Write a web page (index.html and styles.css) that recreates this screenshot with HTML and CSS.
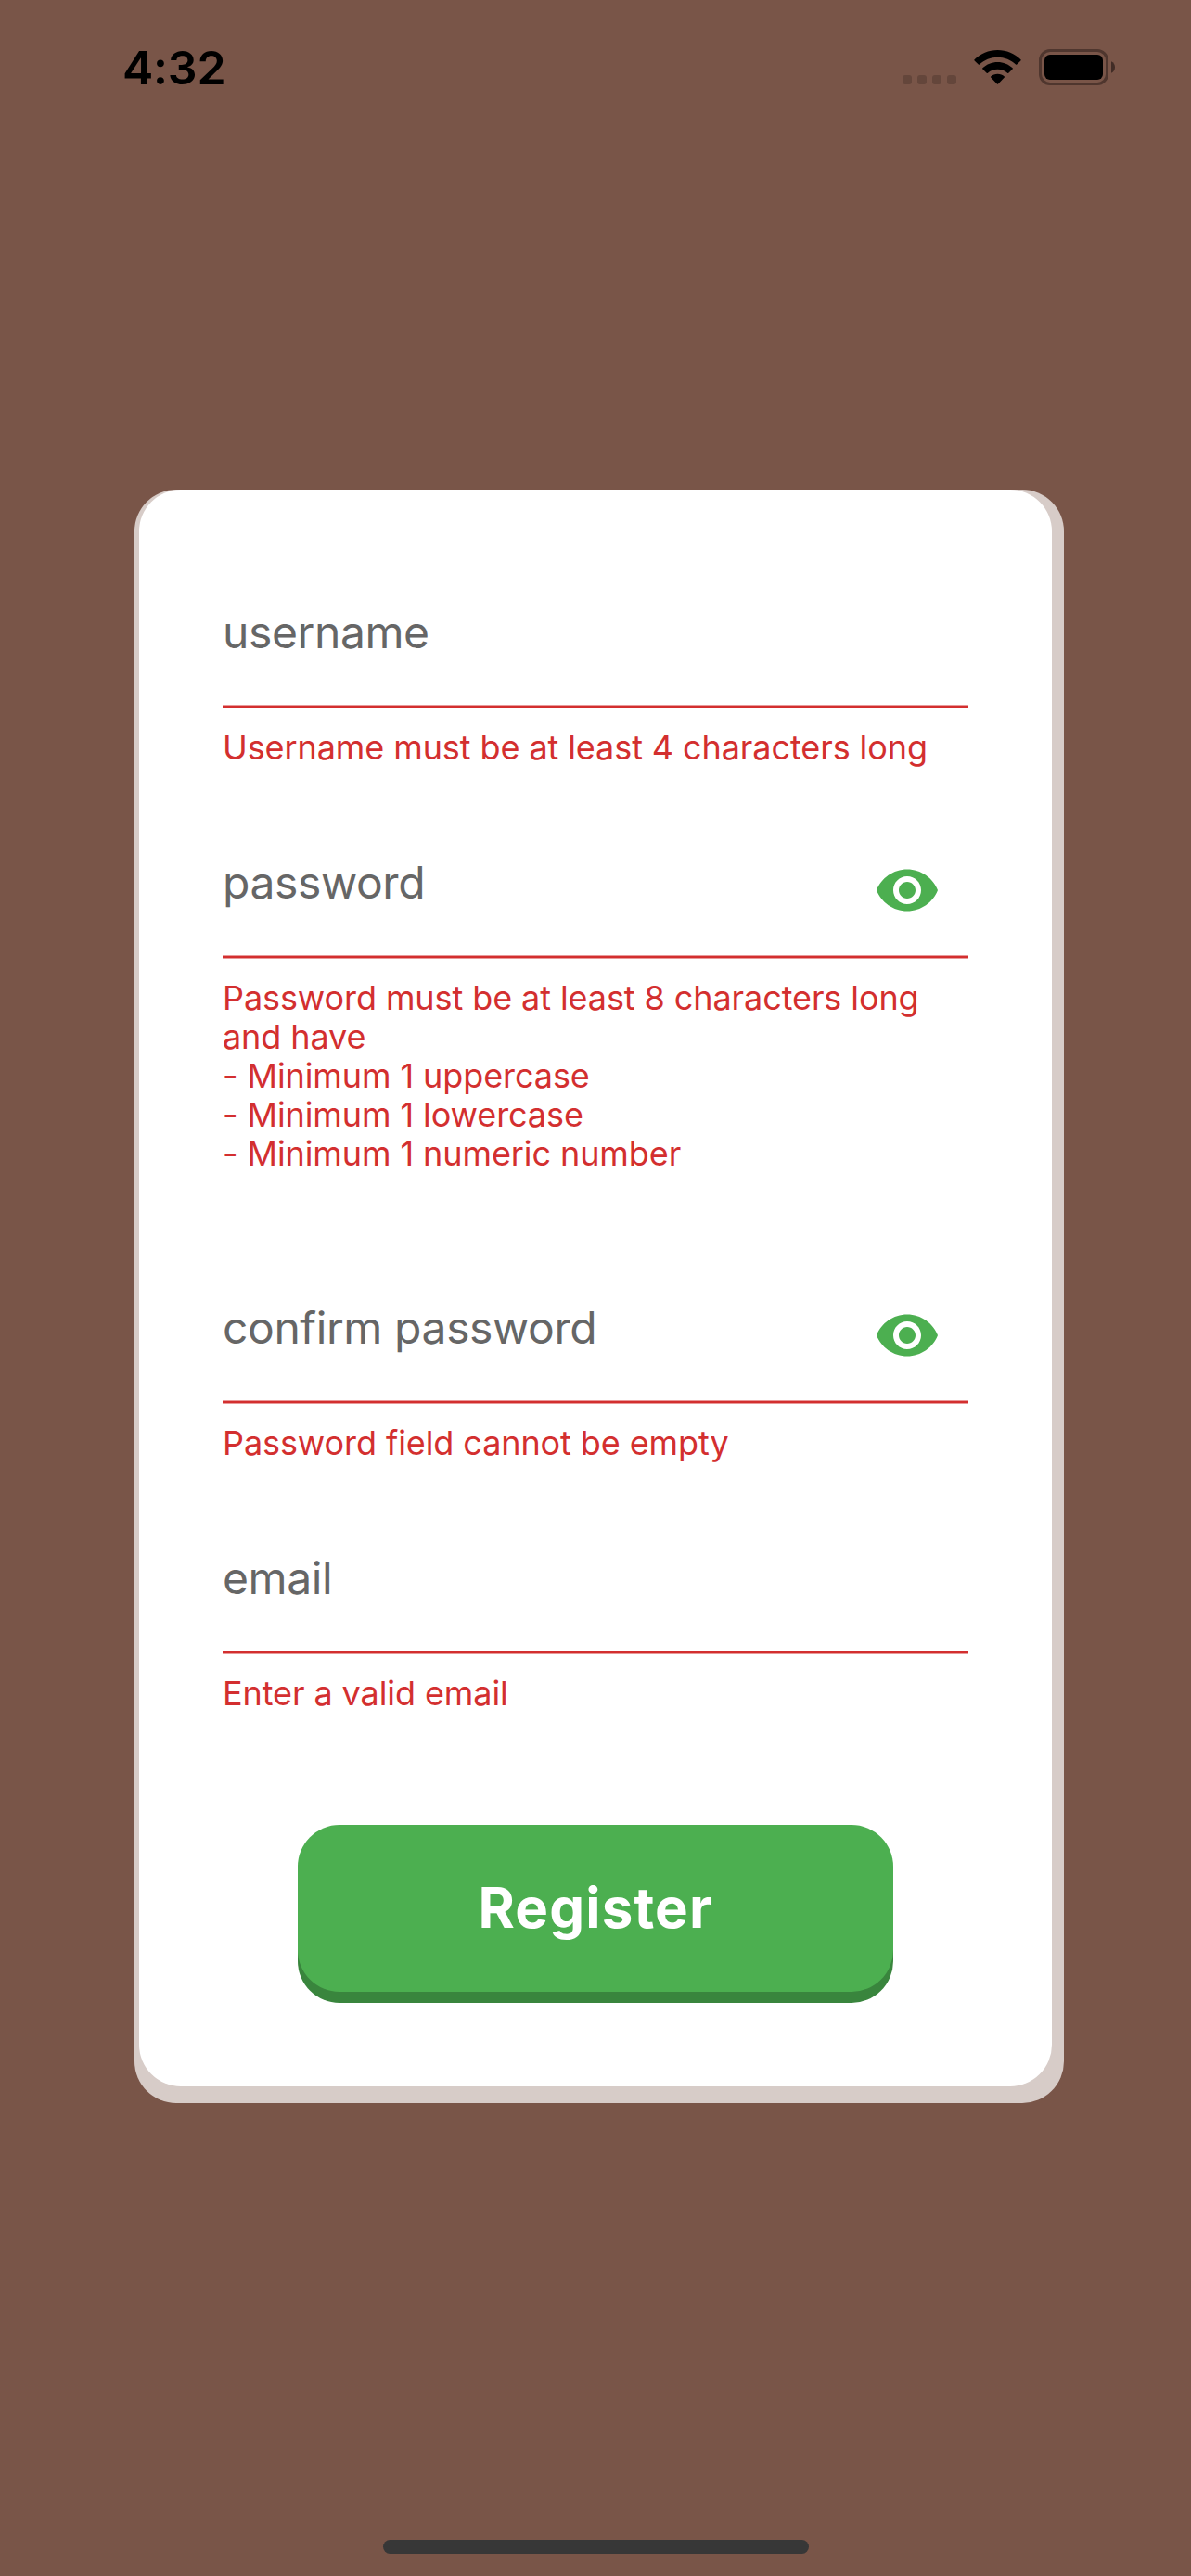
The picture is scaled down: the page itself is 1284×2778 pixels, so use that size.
FILE: index.html
```html
<!DOCTYPE html>
<html lang="en">
<head>
<meta charset="utf-8">
<title>Register</title>
<link rel="stylesheet" href="styles.css">
</head>
<body>
<div class="screen">
  <header class="status-bar">
    <span class="clock">4:32</span>
    <div class="indicators">
      <div class="signal"><i class="dot"></i><i class="dot"></i><i class="dot"></i><i class="dot"></i></div>
      <svg class="wifi" viewBox="0 0 51 38" aria-label="Wi-Fi">
        <path d="M25.5 0C35.2 0 44 3.8 50.5 10.2Q51 10.8 50.4 11.4L46.2 15.6Q45.6 16.1 45 15.6C39.8 10.7 33 7.8 25.5 7.8S11.200 10.700 6 15.600Q5.400 16.100 4.800 15.600L.6 11.400Q0 10.800.5 10.200C7 3.800 15.800 0 25.500 0Z"/>
        <path d="M25.500 12.900C31.700 12.900 37.300 15.300 41.600 19.200Q42.200 19.800 41.600 20.400L37.300 24.700Q36.700 25.200 36.100 24.700C33.300 22.200 29.600 20.700 25.500 20.700S17.700 22.200 14.900 24.700Q14.300 25.200 13.700 24.700L9.400 20.400Q8.800 19.800 9.400 19.200C13.700 15.300 19.300 12.900 25.500 12.900Z"/>
        <path d="M25.500 25.800C28.300 25.800 30.900 26.800 32.800 28.400Q33.400 29 32.800 29.600L26.100 36.500Q25.500 37.100 24.900 36.500L18.200 29.600Q17.600 29 18.200 28.400C20.100 26.800 22.700 25.800 25.500 25.800Z"/>
      </svg>
      <svg class="battery" viewBox="0 0 82 39" aria-label="Battery full">
        <rect x="1.500" y="1.500" width="72" height="36" rx="10.500" fill="none" stroke="#4f362e" stroke-width="3"/>
        <rect x="6" y="6" width="63" height="27" rx="6"/>
        <path d="M78 13.300C80.500 14.400 82 16.800 82 19.500S80.500 24.600 78 25.700Z" fill="#412c26"/>
      </svg>
    </div>
  </header>

  <main class="card">
    <form class="form">
      <div class="field">
        <div class="control"><span class="label">username</span></div>
        <p class="error">Username must be at least 4 characters long</p>
      </div>
      <div class="field field-rules">
        <div class="control">
          <span class="label">password</span>
          <svg class="eye" viewBox="0 0 24 24"><path d="M12 4.500C7 4.500 2.730 7.610 1 12c1.730 4.390 6 7.500 11 7.500s9.270-3.110 11-7.500c-1.730-4.390-6-7.500-11-7.500zM12 17c-2.760 0-5-2.240-5-5s2.240-5 5-5 5 2.240 5 5-2.240 5-5 5zm0-8c-1.660 0-3 1.340-3 3s1.340 3 3 3 3-1.340 3-3-1.340-3-3-3z"/></svg>
        </div>
        <p class="error">Password must be at least 8 characters long and have<br>- Minimum 1 uppercase<br>- Minimum 1 lowercase<br>- Minimum 1 numeric number</p>
      </div>
      <div class="field">
        <div class="control">
          <span class="label">confirm password</span>
          <svg class="eye" viewBox="0 0 24 24"><path d="M12 4.500C7 4.500 2.730 7.610 1 12c1.730 4.390 6 7.500 11 7.500s9.270-3.110 11-7.500c-1.730-4.390-6-7.500-11-7.500zM12 17c-2.760 0-5-2.240-5-5s2.240-5 5-5 5 2.240 5 5-2.240 5-5 5zm0-8c-1.660 0-3 1.340-3 3s1.340 3 3 3 3-1.340 3-3-1.340-3-3-3z"/></svg>
        </div>
        <p class="error">Password field cannot be empty</p>
      </div>
      <div class="field">
        <div class="control"><span class="label">email</span></div>
        <p class="error">Enter a valid email</p>
      </div>
      <button class="submit" type="button">Register</button>
    </form>
  </main>

  <div class="home-indicator"></div>
</div>
</body>
</html>
```
FILE: styles.css
```css
* {
  box-sizing: border-box;
}

body {
  margin: 0;
  font-family: Inter, "Liberation Sans", sans-serif;
}

.screen {
  display: flex;
  flex-direction: column;
  width: 1284px;
  height: 2778px;
  padding-bottom: 24px;
  background: #795548;
}

/* Status bar */
.status-bar {
  display: flex;
  justify-content: space-between;
  align-items: flex-start;
  height: 528px;
  padding: 53px 82px 0 132px;
}

.clock {
  margin-top: -11px;
  font-size: 50px;
  font-weight: 600;
  line-height: 62px;
  letter-spacing: -0.2px;
  color: #000;
}

.indicators {
  display: flex;
  align-items: flex-start;
}

.signal {
  display: flex;
  gap: 6px;
  margin: 28px 19px 0 0;
}

.dot {
  width: 10px;
  height: 10px;
  border-radius: 3px;
  background: #64463b;
}

.wifi {
  width: 51px;
  height: 38px;
  margin: 1px 19px 0 0;
}

.battery {
  width: 82px;
  height: 39px;
}

/* Card: white sheet over an offset backing sheet */
.card {
  width: 1002px;
  height: 1740px;
  margin-left: 145px;
  padding: 0 13px 18px 5px;
  border-radius: 45px;
  background: #d7ccc8;
}

.form {
  display: flex;
  flex-direction: column;
  height: 1722px;
  padding: 76px 90px 102px;
  border-radius: 45px;
  background: #fff;
}

.field {
  margin-bottom: 47px;
}

.field-rules {
  margin-bottom: 89px;
}

/* Soft-edged underline */
.control {
  display: flex;
  justify-content: space-between;
  align-items: flex-start;
  height: 160px;
  background: linear-gradient(#e99999 1px, #d32f2f 1px, #d32f2f 3px, #e99999 3px) bottom / 100% 4px no-repeat;
}

.label {
  margin-top: 48px;
  font-size: 48px;
  line-height: 60px;
  letter-spacing: -0.400px;
  color: #666;
}

.eye {
  width: 72px;
  height: 72px;
  margin: 50px 30px 0 0;
  fill: #4caf50;
}

.error {
  margin: 0;
  padding-top: 21px;
  font-size: 36px;
  line-height: 42px;
  letter-spacing: -0.090px;
  color: #d32f2f;
}

.submit {
  align-self: center;
  width: 642px;
  height: 180px;
  margin-top: 74px;
  padding: 0 0 2px;
  border: 0;
  border-radius: 45px;
  background: #4caf50;
  box-shadow: 0 12px 0 #39853d;
  font: 700 60px/72px Inter, "Liberation Sans", sans-serif;
  letter-spacing: 1.150px;
  color: #fff;
}

.home-indicator {
  width: 459px;
  height: 15px;
  margin: auto auto 0 413px;
  border-radius: 7.500px;
  background: #373737;
}
```
